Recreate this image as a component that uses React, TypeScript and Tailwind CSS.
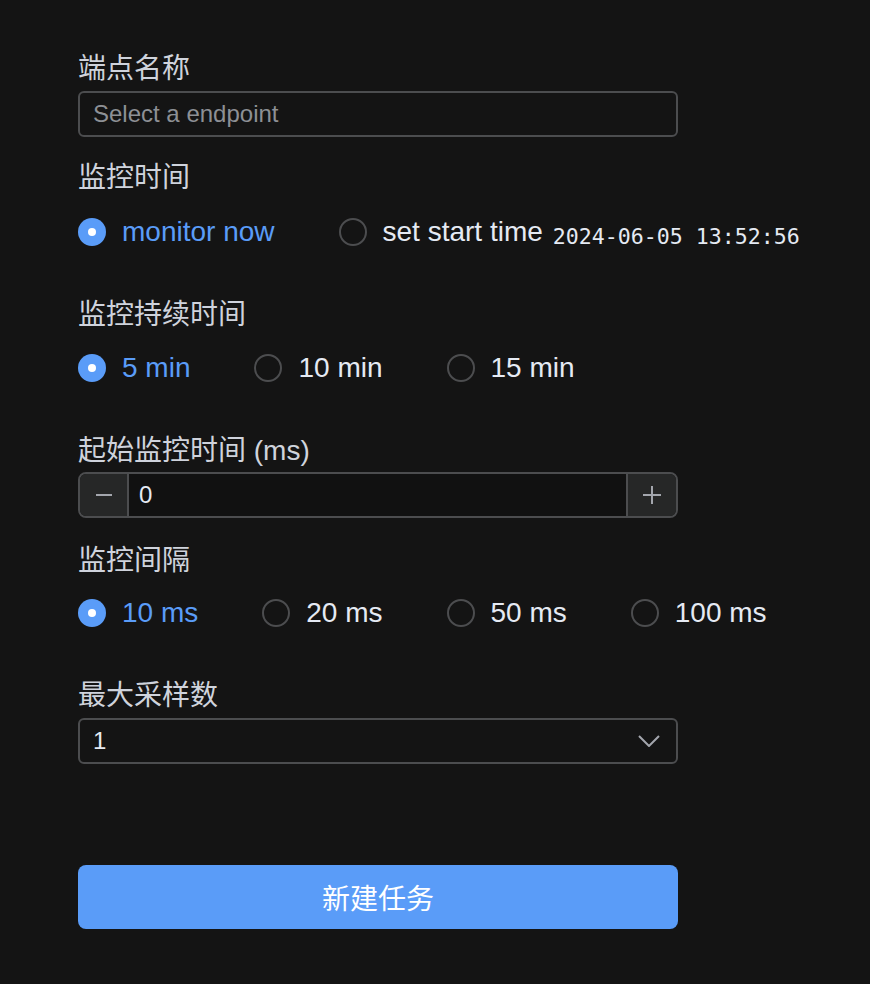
import React, { useState } from 'react';

const latin = "font-['Liberation_Sans','Noto_Sans_CJK_SC',sans-serif]";

type RadioProps = {
  label: string;
  checked: boolean;
  onClick: () => void;
};

const Radio = ({ label, checked, onClick }: RadioProps) => (
  <button type="button" onClick={onClick} className="flex items-center gap-4 h-7 shrink-0 whitespace-nowrap">
    <span
      className={`w-7 h-7 rounded-full flex items-center justify-center ${
        checked ? 'bg-[#5a9cf8]' : 'border-2 border-[#4c4d4f]'
      }`}
    >
      {checked && <span className="w-2 h-2 rounded-full bg-white" />}
    </span>
    <span className={`text-[28px] leading-7 ${checked ? 'text-[#5a9cf8]' : 'text-[#e5eaf3]'}`}>{label}</span>
  </button>
);

const Label = ({ children, className = '' }: { children: React.ReactNode; className?: string }) => (
  <div className={`text-[28px] leading-8 text-[#cfd3dc] whitespace-nowrap ${className}`}>{children}</div>
);

export default function App() {
  const [startMode, setStartMode] = useState(0);
  const [duration, setDuration] = useState(0);
  const [interval, setIntervalIdx] = useState(0);
  const [offset, setOffset] = useState(0);

  return (
    <div className={`min-h-[984px] bg-[#141414] pt-[53px] pl-[78px] ${latin}`}>
      <div className="w-[600px]">
        <Label>端点名称</Label>
        <div className="mt-[6px] h-[46px] rounded-[6px] border-2 border-[#4c4d4f] flex items-center px-[13px]">
          <span className="text-[24px] text-[#8d9095]">Select a endpoint</span>
        </div>

        <Label className="mt-[25px]">监控时间</Label>
        <div className="mt-6 h-7 flex items-center w-[780px]">
          <Radio label="monitor now" checked={startMode === 0} onClick={() => setStartMode(0)} />
          <div className="ml-16">
            <Radio label="set start time" checked={startMode === 1} onClick={() => setStartMode(1)} />
          </div>
          <span className="ml-[10px] pt-[10px] text-[21.6px] leading-7 whitespace-nowrap text-[#e5eaf3] font-['DejaVu_Sans_Mono',monospace]">
            2024-06-05 13:52:56
          </span>
        </div>

        <Label className="mt-[53px]">监控持续时间</Label>
        <div className="mt-[23px] h-7 flex items-center gap-16 w-[780px]">
          {['5 min', '10 min', '15 min'].map((l, i) => (
            <Radio key={l} label={l} checked={duration === i} onClick={() => setDuration(i)} />
          ))}
        </div>

        <Label className="mt-[53px]">起始监控时间 (ms)</Label>
        <div className="mt-[5px] h-[46px] rounded-[8px] border-2 border-[#4c4d4f] flex overflow-hidden">
          <button
            type="button"
            onClick={() => setOffset((v) => Math.max(0, v - 1))}
            className="w-[49px] bg-[#262727] border-r-2 border-[#4c4d4f] flex items-center justify-center"
          >
            <span className="w-4 h-[2px] bg-[#a3a6ad]" />
          </button>
          <div className="flex-1 bg-[#111111] flex items-center px-[10px] text-[24px] text-[#e5eaf3]">{offset}</div>
          <button
            type="button"
            onClick={() => setOffset((v) => v + 1)}
            className="w-[50px] bg-[#262727] border-l-2 border-[#4c4d4f] flex items-center justify-center"
          >
            <svg width="20" height="20" viewBox="0 0 20 20" stroke="#a3a6ad" strokeWidth="2">
              <path d="M10 1v18M1 10h18" />
            </svg>
          </button>
        </div>

        <Label className="mt-[27px]">监控间隔</Label>
        <div className="mt-[22px] h-7 flex items-center gap-16 w-[780px]">
          {['10 ms', '20 ms', '50 ms', '100 ms'].map((l, i) => (
            <Radio key={l} label={l} checked={interval === i} onClick={() => setIntervalIdx(i)} />
          ))}
        </div>

        <Label className="mt-[53px]">最大采样数</Label>
        <div className="mt-[6px] h-[46px] rounded-[6px] border-2 border-[#4c4d4f] flex items-center justify-between pl-[13px] pr-[16px]">
          <span className="text-[24px] text-[#e5eaf3]">1</span>
          <svg width="22" height="12" viewBox="0 0 22 12" fill="none" stroke="#a3a6ad" strokeWidth="2">
            <path d="M1 1l10 10L21 1" />
          </svg>
        </div>

        <button
          type="button"
          className="mt-[101px] w-full h-16 rounded-[8px] bg-[#5a9cf8] text-white text-[28px] font-['Noto_Sans_CJK_SC',sans-serif]"
        >
          新建任务
        </button>
      </div>
    </div>
  );
}
